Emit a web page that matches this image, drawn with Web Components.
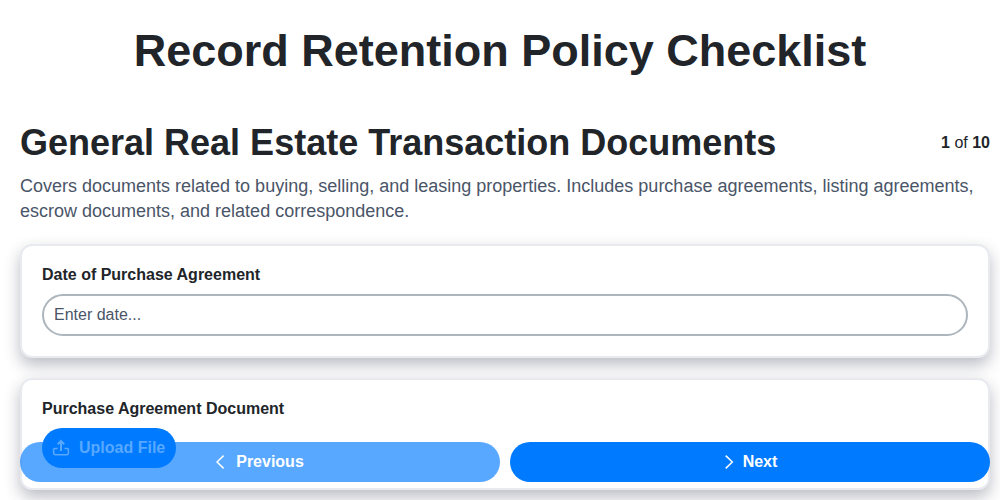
<!DOCTYPE html>
<html lang="en">
<head>
<meta charset="utf-8">
<title>Record Retention Policy Checklist</title>
<style>
  html, body { margin: 0; height: 500px; overflow: hidden; background: #fff; }
  body { font-family: "Liberation Sans", Arial, sans-serif; color: #212529; }
</style>
</head>
<body>
<checklist-page heading="Record Retention Policy Checklist">
  <section-header title="General Real Estate Transaction Documents" current="1" total="10">
    Covers documents related to buying, selling, and leasing properties. Includes purchase agreements, listing agreements, escrow documents, and related correspondence.
  </section-header>
  <field-card label="Date of Purchase Agreement">
    <date-input placeholder="Enter date..."></date-input>
  </field-card>
  <field-card label="Purchase Agreement Document">
    <upload-button>Upload File</upload-button>
  </field-card>
  <wizard-nav slot="footer"></wizard-nav>
</checklist-page>

<script>
// Page shell: title, content column and the bar that floats over the bottom
class ChecklistPage extends HTMLElement {
  constructor() {
    super();
    this.attachShadow({ mode: "open" });
  }

  connectedCallback() {
    const heading = this.getAttribute("heading") || "";
    this.shadowRoot.innerHTML = `
      <style>
        :host { display: block; position: relative; height: 500px; overflow: hidden; }
        h1 {
          margin: 0;
          padding-top: 28px;
          font-size: 45px;
          line-height: 46px;
          font-weight: 700;
          text-align: center;
          color: #212529;
        }
        main {
          display: flex;
          flex-direction: column;
          gap: 20px;
          padding: 49px 10px 0 20px;
        }
        .footer {
          position: absolute;
          left: 20px;
          right: 10px;
          top: 442px;
        }
      </style>
      <h1>${heading}</h1>
      <main><slot></slot></main>
      <div class="footer"><slot name="footer"></slot></div>
    `;
  }
}

class SectionHeader extends HTMLElement {
  constructor() {
    super();
    this.attachShadow({ mode: "open" });
  }

  connectedCallback() {
    const title = this.getAttribute("title") || "";
    const current = this.getAttribute("current");
    const total = this.getAttribute("total");
    this.shadowRoot.innerHTML = `
      <style>
        :host { display: block; }
        .top {
          display: flex;
          justify-content: space-between;
          align-items: center;
        }
        h2 {
          margin: 0;
          font-size: 36px;
          line-height: 40px;
          font-weight: 700;
          color: #212529;
        }
        .count { font-size: 16px; color: #212529; }
        p {
          margin: 11px 0 0;
          font-size: 18px;
          line-height: 25px;
          color: #4a5568;
        }
      </style>
      <div class="top">
        <h2>${title}</h2>
        <span class="count"><b>${current}</b> of <b>${total}</b></span>
      </div>
      <p><slot></slot></p>
    `;
  }
}

class FieldCard extends HTMLElement {
  constructor() {
    super();
    this.attachShadow({ mode: "open" });
  }

  connectedCallback() {
    const label = this.getAttribute("label") || "";
    this.shadowRoot.innerHTML = `
      <style>
        :host {
          display: block;
          box-sizing: border-box;
          padding: 20px;
          background: #fff;
          border: 2px solid #e9eaf0;
          border-radius: 12px;
          box-shadow: 0 7px 16px rgba(30, 32, 60, 0.3);
        }
        label {
          display: block;
          margin-bottom: 10px;
          font-size: 16px;
          line-height: 18px;
          font-weight: 700;
          color: #212529;
        }
      </style>
      <label>${label}</label>
      <slot></slot>
    `;
  }
}

class DateInput extends HTMLElement {
  constructor() {
    super();
    this.attachShadow({ mode: "open" });
  }

  connectedCallback() {
    const placeholder = this.getAttribute("placeholder") || "";
    this.shadowRoot.innerHTML = `
      <style>
        :host { display: block; }
        input {
          display: block;
          box-sizing: border-box;
          width: 100%;
          height: 42px;
          padding: 0 10px;
          font: 16px "Liberation Sans", Arial, sans-serif;
          color: #212529;
          background: #fff;
          border: 2px solid #adb5bd;
          border-radius: 21px;
          outline: none;
        }
        input::placeholder { color: #4a5568; opacity: 1; }
      </style>
      <input type="text" placeholder="${placeholder}">
    `;
  }
}

class UploadButton extends HTMLElement {
  constructor() {
    super();
    this.attachShadow({ mode: "open" });
  }

  connectedCallback() {
    this.shadowRoot.innerHTML = `
      <style>
        :host {
          display: flex;
          width: max-content;
          position: relative;
          z-index: 2;
          align-items: center;
          gap: 9px;
          height: 40px;
          padding: 0 11px 0 10px;
          background: #007bff;
          color: #58a8ff;
          border-radius: 20px;
          font-size: 16px;
          font-weight: 700;
        }
        svg { display: block; }
      </style>
      <svg width="18" height="18" viewBox="0 0 18 18" fill="none" stroke="currentColor" stroke-width="1.5">
        <path d="M9 12V2.2M5.8 5.2 9 2l3.2 3.2" stroke-width="2"/>
        <path d="M5.5 9.5H2.6a1 1 0 0 0-1 1v3.3a2 2 0 0 0 2 2h10.8a2 2 0 0 0 2-2v-3.3a1 1 0 0 0-1-1h-2.9"/>
      </svg>
      <slot></slot>
    `;
  }
}

class WizardNav extends HTMLElement {
  constructor() {
    super();
    this.attachShadow({ mode: "open" });
  }

  connectedCallback() {
    this.shadowRoot.innerHTML = `
      <style>
        :host { display: flex; gap: 10px; }
        button {
          flex: 1;
          display: flex;
          align-items: center;
          justify-content: center;
          gap: 4px;
          height: 40px;
          padding: 0;
          border: 0;
          border-radius: 20px;
          background: #007bff;
          color: #fff;
          font: 700 16px "Liberation Sans", Arial, sans-serif;
        }
        button:disabled { opacity: 0.65; }
        svg { display: block; }
      </style>
      <button disabled>
        <svg width="16" height="16" viewBox="0 0 16 16" fill="none" stroke="currentColor" stroke-width="1.5"><path d="M7.6 1.6 1 8l6.6 6.4"/></svg>
        Previous
      </button>
      <button>
        <svg width="16" height="16" viewBox="0 0 16 16" fill="none" stroke="currentColor" stroke-width="1.5"><path d="M2.7 1.6 9.3 8l-6.6 6.4"/></svg>
        Next
      </button>
    `;
  }
}

customElements.define("checklist-page", ChecklistPage);
customElements.define("section-header", SectionHeader);
customElements.define("field-card", FieldCard);
customElements.define("date-input", DateInput);
customElements.define("upload-button", UploadButton);
customElements.define("wizard-nav", WizardNav);
</script>
</body>
</html>
